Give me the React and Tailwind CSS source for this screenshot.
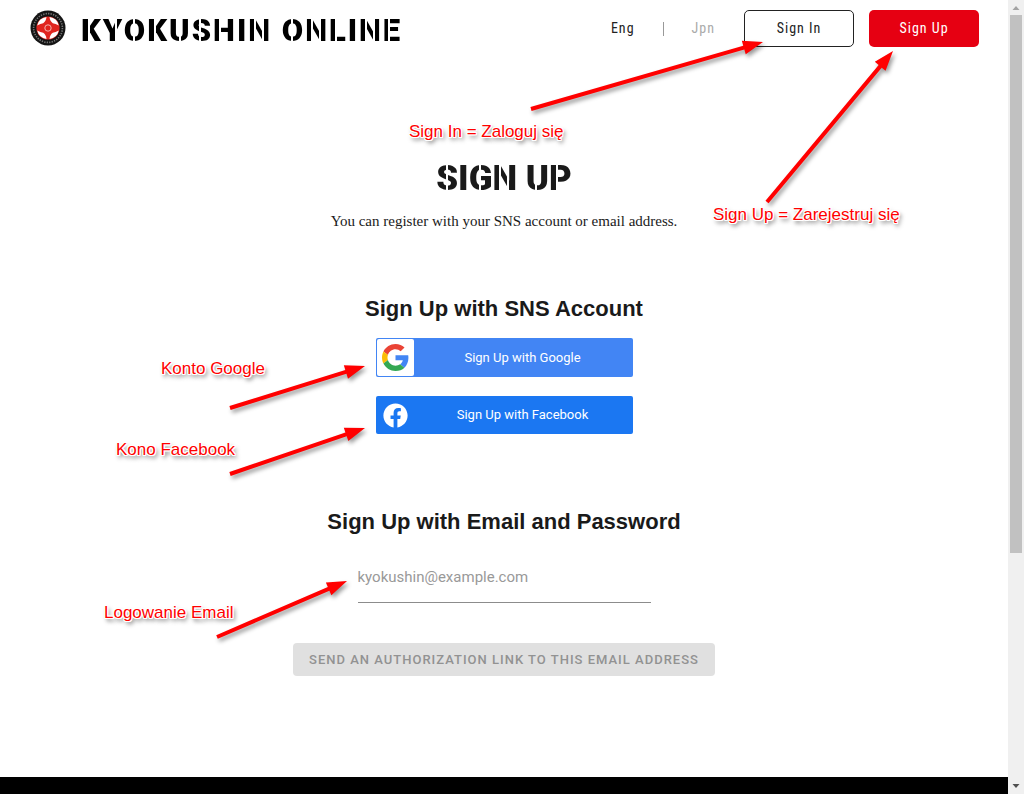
import { useState } from 'react';
import { FaFacebook } from 'react-icons/fa';

const notes = [
  { text: 'Sign In = Zaloguj się', x: 409, y: 122, from: [531, 109], to: [763, 42] },
  { text: 'Sign Up = Zarejestruj się', x: 713, y: 205, from: [767, 202], to: [893, 51] },
  { text: 'Konto Google', x: 161, y: 359, from: [230, 408], to: [365, 366] },
  { text: 'Kono Facebook', x: 116, y: 440, from: [230, 474], to: [365, 428] },
  { text: 'Logowanie Email', x: 104, y: 603, from: [217, 637], to: [347, 581] },
];

// x offsets of the stencil bridges in each heading
const titleCuts = [7, 34, 52, 73, 98, 118, 138, 173, 181, 210, 230, 238, 254, 284, 292, 307];
const signUpCuts = [10, 43, 63, 71, 99, 120];

function Stencil({ cuts, color, children }) {
  const stops = cuts.map(x => `${color} ${x}px, transparent ${x}px ${x + 2}px, ${color} ${x + 2}px`);
  return (
    <span className="bg-clip-text whitespace-nowrap text-transparent" style={{ backgroundImage: `linear-gradient(90deg, ${stops.join(', ')})` }}>
      {children}
    </span>
  );
}

function Logo() {
  return (
    <svg viewBox="0 0 36 36" className="size-9" aria-hidden="true">
      <circle cx="18" cy="18" r="17.5" fill="#151515" />
      <circle cx="18" cy="18" r="14.4" fill="none" stroke="#777" strokeWidth="1.6" strokeDasharray="1.3 1.2" />
      <circle cx="18" cy="18" r="11.6" fill="#e0251f" />
      <g fill="#fff">
        <path id="lobe" d="M7.2 15.5A11 11 0 0 1 16.5 7.1Q16 11.5 13.2 13.2Q10.500 13.500 7.200 15.500Z" />
        <use href="#lobe" transform="matrix(-1 0 0 1 36 0)" />
        <use href="#lobe" transform="matrix(1 0 0 -1 0 36)" />
        <use href="#lobe" transform="rotate(180 18 18)" />
      </g>
      <circle cx="18" cy="18" r="3.2" fill="none" stroke="#f6c4c0" strokeWidth="0.9" />
    </svg>
  );
}

function GoogleIcon() {
  return (
    <svg viewBox="0 0 48 48" className="size-[27px]" aria-hidden="true">
      <path fill="#EA4335" d="M24 9.5c3.54 0 6.71 1.22 9.21 3.6l6.85-6.85C35.9 2.38 30.47 0 24 0 14.62 0 6.51 5.38 2.56 13.22l7.98 6.19C12.43 13.72 17.74 9.5 24 9.5z" />
      <path fill="#4285F4" d="M46.98 24.55c0-1.57-.15-3.09-.38-4.55H24v9.02h12.94c-.58 2.96-2.26 5.48-4.78 7.18l7.73 6c4.51-4.18 7.09-10.36 7.09-17.65z" />
      <path fill="#FBBC05" d="M10.53 28.59c-.48-1.45-.76-2.99-.76-4.59s.27-3.14.76-4.59l-7.98-6.19C.92 16.46 0 20.12 0 24c0 3.88.92 7.54 2.56 10.78l7.97-6.19z" />
      <path fill="#34A853" d="M24 48c6.48 0 11.93-2.13 15.89-5.81l-7.73-6c-2.15 1.45-4.92 2.3-8.16 2.3-6.26 0-11.57-4.22-13.47-9.91l-7.98 6.19C6.51 42.62 14.62 48 24 48z" />
    </svg>
  );
}

function Arrow({ from, to }) {
  const [x1, y1] = from;
  const [x2, y2] = to;
  const len = Math.hypot(x2 - x1, y2 - y1);
  const angle = (Math.atan2(y2 - y1, x2 - x1) * 180) / Math.PI;
  return (
    <g transform={`translate(${x1} ${y1}) rotate(${angle})`}>
      <path d={`M0 -2H${len - 20}V-7L${len} 0L${len - 20} 7V2H0Z`} fill="#f00" />
    </g>
  );
}

function Annotations() {
  return (
    <div className="pointer-events-none absolute top-0 left-1/2 w-[1008px] -translate-x-1/2">
      <svg width="1008" height="700" className="drop-shadow-[2px_3px_2px_rgba(0,0,0,0.4)]" aria-hidden="true">
        {notes.map(n => <Arrow key={n.text} from={n.from} to={n.to} />)}
      </svg>
      {notes.map(n => (
        <span
          key={n.text}
          className="absolute text-[17px] leading-5 whitespace-nowrap text-[#f00] [text-shadow:1px_0_0_#fff,-1px_0_0_#fff,0_1px_0_#fff,0_-1px_0_#fff,1px_1px_0_#fff,-1px_-1px_0_#fff,1px_-1px_0_#fff,-1px_1px_0_#fff,2px_3px_4px_rgba(0,0,0,0.7)]"
          style={{ left: n.x, top: n.y }}
        >
          {n.text}
        </span>
      ))}
    </div>
  );
}

function Header({ lang, setLang }) {
  return (
    <header className="flex items-start justify-between pt-2.5 pr-[29px] pl-[30px]">
      <a href="#" className="flex items-start gap-[15px]">
        <Logo />
        <span className="font-['Roboto'] text-[31px] leading-[42px] font-black tracking-[2px]">
          <Stencil cuts={titleCuts} color="#000">KYOKUSHIN ONLINE</Stencil>
        </span>
      </a>
      <nav className="flex items-center font-['Roboto_Condensed','Liberation_Sans_Narrow',sans-serif] text-[14px] tracking-[1px]">
        <button onClick={() => setLang('eng')} className={lang === 'eng' ? 'text-[#222]' : 'text-[#aaa]'}>Eng</button>
        <span className="mx-7 h-3.5 w-px bg-[#999]" />
        <button onClick={() => setLang('jpn')} className={lang === 'jpn' ? 'text-[#222]' : 'text-[#aaa]'}>Jpn</button>
        <button className="ml-[29px] h-[37px] w-[110px] rounded-[5px] border border-[#222] bg-white text-[#222]">Sign In</button>
        <button className="ml-[15px] h-[37px] w-[110px] rounded-[5px] bg-[#e60012] text-white">Sign Up</button>
      </nav>
    </header>
  );
}

function ScrollBar() {
  return (
    <div className="flex w-4 shrink-0 flex-col items-center bg-[#f0f0f0]" aria-hidden="true">
      <svg width="16" height="15"><path d="M4.5 10L8 6L11.5 10Z" fill="#a3a3a3" /></svg>
      <div className="h-[538px] w-3 bg-[#c1c1c1]" />
      <svg width="16" height="16" className="mt-auto"><path d="M4.5 6L8 10L11.5 6Z" fill="#505050" /></svg>
    </div>
  );
}

export default function App() {
  const [lang, setLang] = useState('eng');
  const [email, setEmail] = useState('');

  return (
    <div className="flex min-h-screen bg-white font-['Liberation_Sans',sans-serif] text-[#1a1a1a]">
      <div className="relative flex flex-1 flex-col">
        <Header lang={lang} setLang={setLang} />

        <main className="flex flex-1 flex-col items-center pt-[107px] pb-20">
          <h1 className="font-['Roboto'] text-[35px] leading-10 font-black">
            <Stencil cuts={signUpCuts} color="#1a1a1a">SIGN UP</Stencil>
          </h1>
          <p className="mt-3 font-['Liberation_Serif',serif] text-[15px] leading-5">You can register with your SNS account or email address.</p>

          <h2 className="mt-16 text-[22px] leading-7 font-bold">Sign Up with SNS Account</h2>
          <div className="mt-[15px] flex w-[257px] flex-col gap-[19px] font-['Roboto'] text-[13px] text-white">
            <button className="flex h-[39px] items-center rounded-xs bg-[#4285f4] p-px">
              <span className="flex h-full w-[37px] items-center justify-center rounded-xs bg-white">
                <GoogleIcon />
              </span>
              <span className="flex-1">Sign Up with Google</span>
            </button>
            <button className="flex h-[38px] items-center rounded-xs bg-[#1b77f2] p-px">
              <span className="flex w-[37px] justify-center">
                <FaFacebook size={25} />
              </span>
              <span className="flex-1">Sign Up with Facebook</span>
            </button>
          </div>

          <h2 className="mt-[74px] text-[22px] leading-7 font-bold">Sign Up with Email and Password</h2>
          <form className="flex flex-col items-center" onSubmit={e => e.preventDefault()}>
            <input
              type="email"
              aria-label="Email address"
              placeholder="kyokushin@example.com"
              value={email}
              onChange={e => setEmail(e.target.value)}
              className="mt-4 h-[51px] w-[293px] border-b border-[#8c8c8c] font-['Roboto'] text-[15px] outline-none placeholder:text-[#999]"
            />
            <button disabled={!email} className="mt-10 h-[33px] w-[422px] rounded-sm bg-[#e0e0e0] font-['Roboto'] text-[13px] font-medium tracking-[1px] text-[#929292]">
              SEND AN AUTHORIZATION LINK TO THIS EMAIL ADDRESS
            </button>
          </form>
        </main>

        <footer className="h-[17px] bg-black" />
        <Annotations />
      </div>
      <ScrollBar />
    </div>
  );
}
